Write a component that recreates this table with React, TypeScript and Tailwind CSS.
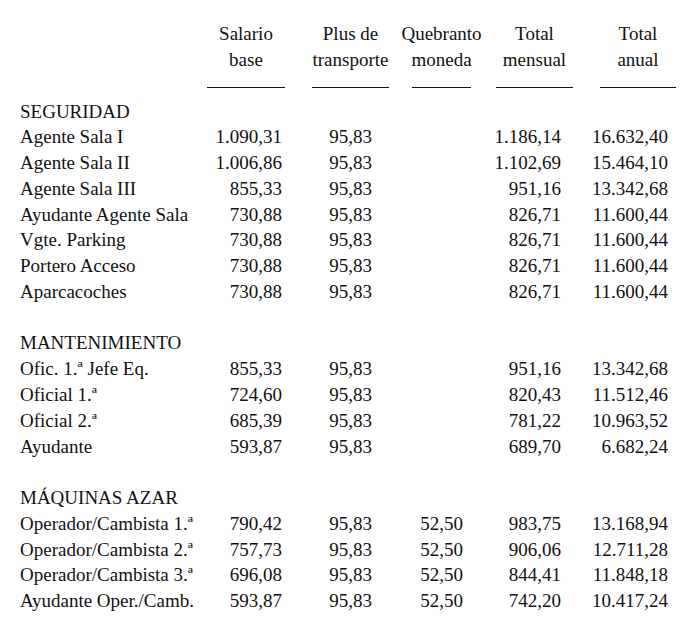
const headers = [
  { top: "Salario", bottom: "base" },
  { top: "Plus de", bottom: "transporte" },
  { top: "Quebranto", bottom: "moneda" },
  { top: "Total", bottom: "mensual" },
  { top: "Total", bottom: "anual" },
];

// column box = the rule under the header; numbers sit inside it
const colBox = [
  "w-[78px]",
  "ml-[27px] w-[77px]",
  "ml-[23px] w-[59px]",
  "ml-[25px] w-[77px]",
  "ml-[27px] w-[76px]",
];

// flex so that wide figures overflow to the left instead of the right
const numAlign = [
  "justify-end pr-[3px]",
  "justify-center",
  "justify-center",
  "justify-end pr-[12px]",
  "justify-end pr-[8px]",
];

type Row = { label: string; values: string[] };
type Section = { title: string; rows: Row[] };

const sections: Section[] = [
  {
    title: "SEGURIDAD",
    rows: [
      { label: "Agente Sala I", values: ["1.090,31", "95,83", "", "1.186,14", "16.632,40"] },
      { label: "Agente Sala II", values: ["1.006,86", "95,83", "", "1.102,69", "15.464,10"] },
      { label: "Agente Sala III", values: ["855,33", "95,83", "", "951,16", "13.342,68"] },
      { label: "Ayudante Agente Sala", values: ["730,88", "95,83", "", "826,71", "11.600,44"] },
      { label: "Vgte. Parking", values: ["730,88", "95,83", "", "826,71", "11.600,44"] },
      { label: "Portero Acceso", values: ["730,88", "95,83", "", "826,71", "11.600,44"] },
      { label: "Aparcacoches", values: ["730,88", "95,83", "", "826,71", "11.600,44"] },
    ],
  },
  {
    title: "MANTENIMIENTO",
    rows: [
      { label: "Ofic. 1.ª Jefe Eq.", values: ["855,33", "95,83", "", "951,16", "13.342,68"] },
      { label: "Oficial 1.ª", values: ["724,60", "95,83", "", "820,43", "11.512,46"] },
      { label: "Oficial 2.ª", values: ["685,39", "95,83", "", "781,22", "10.963,52"] },
      { label: "Ayudante", values: ["593,87", "95,83", "", "689,70", "6.682,24"] },
    ],
  },
  {
    title: "MÁQUINAS AZAR",
    rows: [
      { label: "Operador/Cambista 1.ª", values: ["790,42", "95,83", "52,50", "983,75", "13.168,94"] },
      { label: "Operador/Cambista 2.ª", values: ["757,73", "95,83", "52,50", "906,06", "12.711,28"] },
      { label: "Operador/Cambista 3.ª", values: ["696,08", "95,83", "52,50", "844,41", "11.848,18"] },
      { label: "Ayudante Oper./Camb.", values: ["593,87", "95,83", "52,50", "742,20", "10.417,24"] },
    ],
  },
];

function DataRow({ row }: { row: Row }) {
  return (
    <div className="flex h-[25.78px] items-center">
      <div className="w-[187px] shrink-0 whitespace-nowrap">{row.label}</div>
      {row.values.map((v, i) => (
        <div key={i} className={`${colBox[i]} ${numAlign[i]} flex shrink-0`}>
          <span className="whitespace-nowrap">{v}</span>
        </div>
      ))}
    </div>
  );
}

export default function App() {
  return (
    <div
      className="w-[683px] h-[618px] bg-white pl-5 pt-[21px] text-[19px] leading-[25.78px] text-[#111] overflow-hidden"
      style={{ fontFamily: '"Liberation Serif", "Times New Roman", serif' }}
    >
      {/* Header */}
      <div className="flex">
        <div className="w-[187px] shrink-0" />
        {headers.map((h, i) => (
          <div key={i} className={`${colBox[i]} flex shrink-0 flex-col items-center`}>
            <div className="whitespace-nowrap">{h.top}</div>
            <div className="whitespace-nowrap">{h.bottom}</div>
            <div className="mt-[14px] h-px w-full bg-[#111]" />
          </div>
        ))}
      </div>

      <div className="mt-[11px]">
        {sections.map((s, si) => (
          <div key={s.title}>
            {si > 0 && <div className="h-[25.78px]" />}
            <div className="h-[25.78px] whitespace-nowrap">{s.title}</div>
            {s.rows.map((r) => (
              <DataRow key={r.label} row={r} />
            ))}
          </div>
        ))}
      </div>
    </div>
  );
}
